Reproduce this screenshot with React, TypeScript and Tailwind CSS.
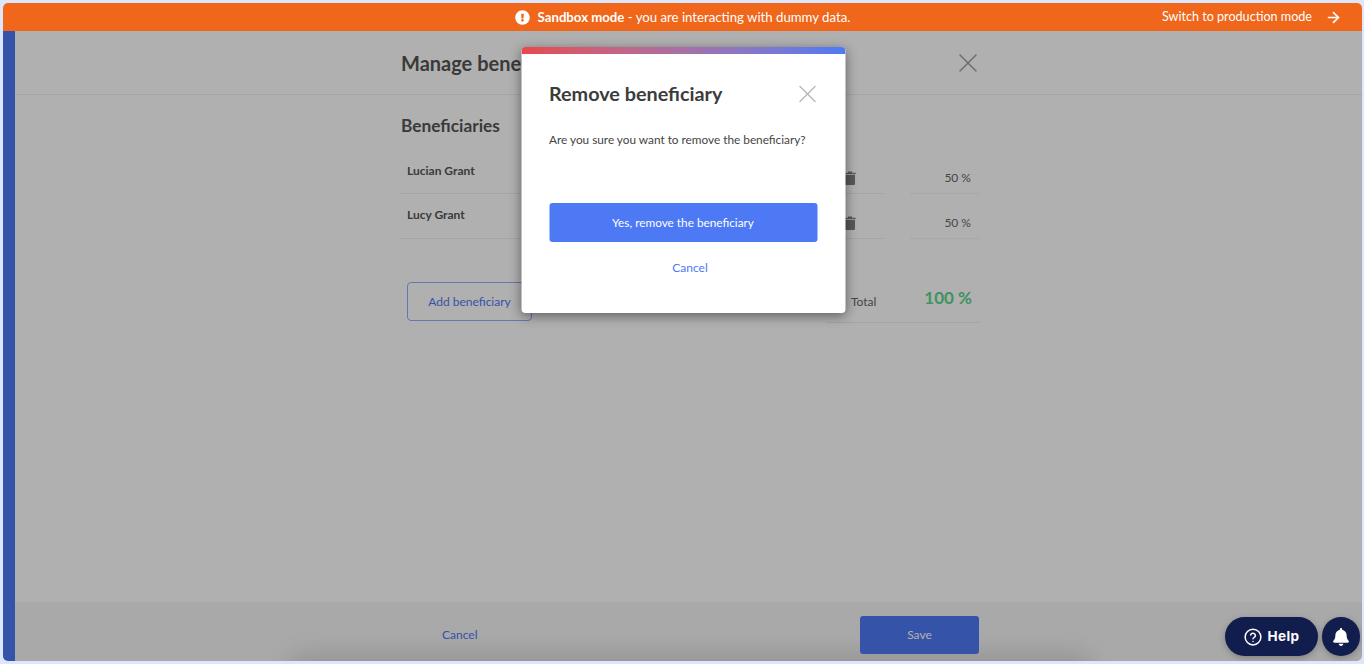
import { ArrowRight, X } from "lucide-react";
import { FaBell, FaExclamationCircle } from "react-icons/fa";

const lato = "font-['Lato','Noto_Sans',sans-serif]";

function Trash() {
  return (
    <svg width="12" height="14" viewBox="0 0 12 14" className="fill-[#808080]">
      <path d="M4 0.5h4v1.2h3.6v1.6H0.4V1.7H4z" />
      <path d="M1 4h10v9a1 1 0 0 1-1 1H2a1 1 0 0 1-1-1z" />
    </svg>
  );
}

function Row({ name, h, nameTop, sideTop, valueTop }: { name: string; h: string; nameTop: string; sideTop: string; valueTop: string }) {
  return (
    <div className={`flex ${h}`}>
      <div className="flex w-[482px] border-b border-[#eeeeee] pl-[6px]">
        <span className={`${nameTop} text-[12px] font-bold leading-[15px] text-[#555]`}>{name}</span>
        <span className={`ml-auto mr-[27px] ${sideTop}`}>
          <Trash />
        </span>
      </div>
      <div className={`ml-[28px] w-[68px] border-b border-dotted border-[#e6e6e6] pr-[8px] text-right ${valueTop} text-[12px] leading-[15px] text-[#666]`}>
        50 %
      </div>
    </div>
  );
}

export default function App() {
  return (
    <div className={`${lato} h-[664px] w-full bg-[#dde6fb] pt-[3px] pl-[3px] pr-[2px] pb-[3px]`}>
      <div className="relative flex h-full flex-col overflow-hidden rounded-[5px] bg-white">
        <div className="relative z-20 flex h-[28px] shrink-0 items-center justify-center bg-[#f0661b] pt-[1px] text-[13.2px] text-white">
          <FaExclamationCircle className="mr-[8px] text-[15px]" />
          <span>
            <b className="font-bold">Sandbox mode</b> - you are interacting with dummy data.
          </span>
          <div className="absolute right-[20px] top-0 flex h-full items-center gap-[13px] text-[12.6px]">
            <span>Switch to production mode</span>
            <ArrowRight size={17} strokeWidth={2.4} />
          </div>
        </div>

        <div className="relative flex min-h-0 flex-1">
          <div className="w-[12px] shrink-0 bg-[#4d79f5]" />
          <div className="flex min-w-0 flex-1 flex-col">
            <div className="flex h-[64px] shrink-0 items-center border-b border-[#f0f0f0] pl-[386px] pr-[378px]">
              <span className="text-[20px] font-bold text-[#555]">Manage beneficiaries</span>
              <X size={32} strokeWidth={1.1} className="ml-auto text-[#a0a0a0]" />
            </div>
            <div className="flex-1 pl-[386px]">
              <h2 className="mt-[20px] text-[17.3px] font-bold leading-[22px] text-[#555]">Beneficiaries</h2>
              <div className="mt-[14px]">
                <Row name="Lucian Grant" h="h-[43px]" nameTop="mt-[12px]" sideTop="mt-[20px]" valueTop="pt-[19px]" />
                <Row name="Lucy Grant" h="mt-[1px] h-[44px]" nameTop="mt-[12px]" sideTop="mt-[21px]" valueTop="pt-[20px]" />
              </div>
              <div className="relative mt-[43px] flex w-[578px]">
                <button className="ml-[6px] h-[39px] w-[125px] rounded-[4px] border border-[#8fb0ff] text-[12px] text-[#4d79f5]">
                  Add beneficiary
                </button>
                <div className="ml-auto flex h-[41px] w-[153px] items-center border-b border-[#eeeeee] pl-[25px] pr-[7px]">
                  <span className="mt-[-1px] text-[12px] text-[#666]">Total</span>
                  <span className="ml-auto mt-[-8px] text-[17px] font-bold text-[#5cd68c]">100 %</span>
                </div>
              </div>
            </div>
            <div className="relative flex h-[59px] shrink-0 items-center overflow-hidden bg-[#f5f5f5] pl-[427px]">
              <div className="absolute bottom-[-20px] left-[280px] h-[20px] w-[790px] rounded-full shadow-[0_0_24px_8px_rgba(0,0,0,0.12)]" />
              <span className="mt-[6px] w-[36px] text-[12px] text-[#4d79f5]">Cancel</span>
              <button className="relative ml-[382px] mt-[6px] h-[38px] w-[119px] rounded-[3px] bg-[#4d79f5] text-[12px] text-white">
                Save
              </button>
            </div>
          </div>

          <div className="absolute inset-0 z-10 flex justify-center bg-black/[0.31] pt-[16px]">
            <div className="h-[266px] w-[324px] translate-x-[0.5px] overflow-hidden rounded-[4px] bg-white shadow-[0_3px_12px_rgba(0,0,0,0.45)]">
              <div className="h-[7px] bg-gradient-to-r from-[#e8474c] to-[#4d79f5]" />
              <div className="px-[28px]">
                <div className="mt-[26px] flex h-[26px] items-center justify-between">
                  <span className="text-[19.8px] font-bold leading-[26px] text-[#3c3c3c]">Remove beneficiary</span>
                  <X size={30} strokeWidth={1.1} className="mr-[-5px] mt-[1px] text-[#b9b9b9]" />
                </div>
                <p className="mt-[26px] whitespace-nowrap text-[11.8px] leading-[16px] text-[#444]">
                  Are you sure you want to remove the beneficiary?
                </p>
                <button className="mt-[55px] h-[39px] w-[268px] rounded-[3px] bg-[#4d79f5] text-[11.8px] text-white">
                  Yes, remove the beneficiary
                </button>
                <div className="mt-[18px] pl-[14px] text-center text-[12px] leading-[16px] text-[#4d79f5]">Cancel</div>
              </div>
            </div>
          </div>

          <div className="absolute bottom-[5px] right-[2px] z-20 flex gap-[4px]">
            <div className="flex h-[39px] w-[93px] items-center justify-center gap-[6px] rounded-full bg-[#111d4d] font-['Inter',sans-serif] text-[13.5px] font-bold tracking-[0.4px] text-white shadow-[0_2px_6px_rgba(0,0,0,0.25)]">
              <svg width="18" height="18" viewBox="0 0 24 24" fill="none" stroke="currentColor" strokeWidth="2" strokeLinecap="round" strokeLinejoin="round">
                <circle cx="12" cy="12" r="10.5" />
                <path d="M8.8 9.2a3.3 3.3 0 0 1 6.4 1c0 2.2-3.2 2.6-3.2 4.2" />
                <path d="M12 18h.01" />
              </svg>
              Help
            </div>
            <div className="flex h-[39px] w-[38px] items-center justify-center rounded-full bg-[#111d4d] text-[18px] text-white shadow-[0_2px_6px_rgba(0,0,0,0.25)]">
              <FaBell />
            </div>
          </div>
        </div>
      </div>
    </div>
  );
}
